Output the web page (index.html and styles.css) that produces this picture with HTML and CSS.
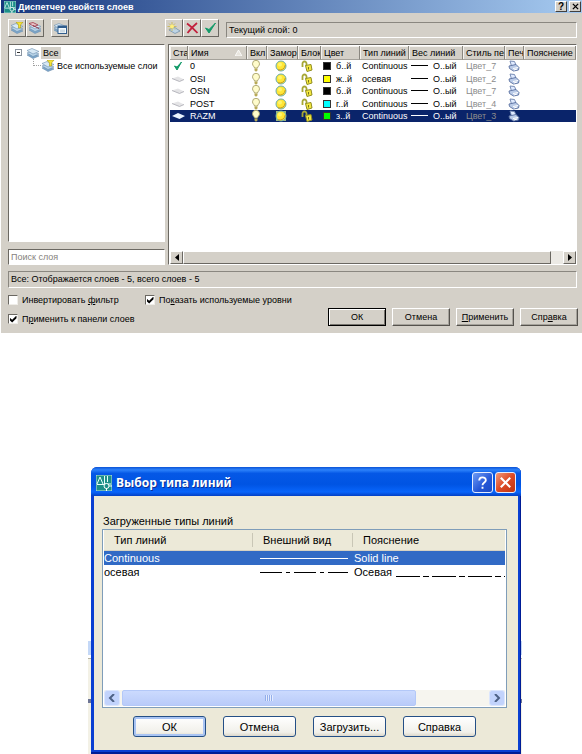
FILE: index.html
```html
<!DOCTYPE html>
<html lang="ru">
<head>
<meta charset="utf-8">
<title>Диспетчер свойств слоев</title>
<link rel="stylesheet" href="styles.css">
</head>
<body>
<svg class="sprite" aria-hidden="true">
  <symbol id="logo" viewBox="0 0 16 16">
    <rect width="16" height="16" fill="#1d8f88"/>
    <path d="M0 0H16V16H0Z" fill="none" stroke="#bfe3e0"/>
    <path d="M1 9L4 2L7 9M8.500 1V9H15M11.500 1V7M1 9.500H8" fill="none" stroke="#e8fffc"/>
    <circle cx="10.5" cy="11" r="2.5" fill="#1d8f88" stroke="#fff"/>
    <path d="M10.500 13V16M13 11H16" stroke="#fff"/>
  </symbol>
  <symbol id="layers" viewBox="0 0 14 12">
    <g stroke="#6d8fae" stroke-width=".6">
      <path d="M1 8L6 6L13 9L7 11.500Z" fill="#7ba6cb"/>
      <path d="M1 6L6 4L13 7L7 9.500Z" fill="#b9d4e8"/>
      <path d="M1 3.500L6 1.500L13 4.500L7 7Z" fill="#d7e8f4"/>
    </g>
  </symbol>
  <symbol id="layers-filter" viewBox="0 0 14 12">
    <use href="#layers"/>
    <path d="M6 0H13L10.500 3V6H8.500V3Z" fill="#f5e335" stroke="#a79a18" stroke-width=".6"/>
  </symbol>
  <symbol id="layers-group" viewBox="0 0 14 12">
    <use href="#layers"/>
    <path d="M1 1.500L5 .5L10 3L6 4.500Z" fill="#e7c4c8" stroke="#a33a49" stroke-width=".8"/>
    <path d="M5 3.500L11 6.500" stroke="#8c3346"/>
  </symbol>
  <symbol id="layers-state" viewBox="0 0 14 12">
    <use href="#layers"/>
    <rect x="5" y="4" width="8.500" height="7.500" fill="#f5fafd" stroke="#315d8d"/>
    <path d="M5 5H14" stroke="#315d8d" stroke-width="2"/>
    <rect x="7" y="7.500" width="5" height="3" fill="#cbd9e4"/>
  </symbol>
  <symbol id="layer-new" viewBox="0 0 14 12">
    <path d="M2 8L7 5L13 9L8 11.500Z" fill="#bed4e5" stroke="#6b8ba6" stroke-width=".7"/>
    <path d="M5 0V9M.5 4.500H9.500M2 1.500L8 7.500M8 1.500L2 7.500" stroke="#c8b64b" stroke-width=".8"/>
    <circle cx="5" cy="4.500" r="2" fill="#ffef7c"/>
  </symbol>
  <symbol id="cross" viewBox="0 0 14 12">
    <path d="M2 1.500Q7 5 12.500 11M12 1Q7 5 2.500 11" fill="none" stroke="#c2203c" stroke-width="1.800"/>
  </symbol>
  <symbol id="tick" viewBox="0 0 14 12">
    <path d="M2.500 6L6 11L12.500 1L6 7.500Z" fill="#129a68" stroke="#129a68"/>
  </symbol>
  <symbol id="tick-small" viewBox="0 0 14 12">
    <path d="M2.500 6L5 10L9.500 2L5 7Z" fill="#129a68" stroke="#129a68"/>
  </symbol>
  <symbol id="sheet" viewBox="0 0 14 12">
    <path d="M0 5.500L6 3.500L12 6.500L7.500 8.500Z" fill="#e4e4e6"/>
    <path d="M0 5.500L7.500 8.500L12 6.500" fill="none" stroke="#b0b0b8" stroke-width=".9"/>
  </symbol>
  <symbol id="sheet-on" viewBox="0 0 14 12">
    <path d="M0 6L6 3L13 6L7.500 9Z" fill="#e9f3ff"/>
  </symbol>
  <symbol id="bulb" viewBox="0 0 10 12">
    <path d="M3.500 8C3.500 6.500 1.500 6 1.500 3.800A3.500 3.500 0 0 1 8.500 3.800C8.500 6 6.500 6.500 6.500 8Z" fill="#fffccb" stroke="#a8a06a" stroke-width=".9"/>
    <path d="M3.500 8.500H6.500V10.500L5 11.800L3.500 10.500Z" fill="#b8a955"/>
  </symbol>
  <symbol id="sun" viewBox="0 0 12 12">
    <circle cx="6" cy="6" r="5" fill="#ffe636" stroke="#67abb0" stroke-width="1"/>
    <path d="M3 9.800Q9 11 10.300 5" fill="none" stroke="#c79c20"/>
    <circle cx="5" cy="4.500" r="2" fill="#fff56b"/>
  </symbol>
  <symbol id="sun-on" viewBox="0 0 12 12">
    <rect x="1" y="1" width="10" height="10" fill="#9db77a"/>
    <use href="#sun"/>
  </symbol>
  <symbol id="lock" viewBox="0 0 12 12">
    <path d="M1.500 7V3.500A2 2 0 0 1 5.500 3.500V6" fill="none" stroke="#a7a735" stroke-width="1.800"/>
    <path d="M4.500 5.500L10 4.500L11 10L6 11.500Z" fill="#f5e83f" stroke="#918e22"/>
    <path d="M7.500 7V9.500" stroke="#77741b"/>
  </symbol>
  <symbol id="printer" viewBox="0 0 12 12">
    <path d="M2 1L6.500 1.500L8 5L3.500 6Z" fill="#dfeaff" stroke="#6c82ae" stroke-width=".9"/>
    <path d="M1 6L8 4.500L11 7.500L10.500 10L5.500 11L1.500 8.500Z" fill="#bacbe8" stroke="#5a70a0" stroke-width=".9"/>
    <path d="M5 8.500L10 7.500M6 10L9 9" stroke="#fff"/>
  </symbol>
</svg>

<section class="layers-dialog">
  <header class="classic-title">
    <svg class="title-icon"><use href="#logo"/></svg>
    <h1>Диспетчер свойств слоев</h1>
    <button class="cap" aria-label="Справка по окну">?</button>
    <button class="cap" aria-label="Закрыть окно"><svg viewBox="0 0 8 8"><path d="M1 1L7 7M7 1L1 7" stroke="#000" stroke-width="1.500"/></svg></button>
  </header>
  <div class="layers-body">
    <div class="tools">
      <div class="tools-left">
        <button class="tool" aria-label="Новый фильтр"><svg><use href="#layers-filter"/></svg></button>
        <button class="tool" aria-label="Новая группа"><svg><use href="#layers-group"/></svg></button>
        <button class="tool apart" aria-label="Состояния слоев"><svg><use href="#layers-state"/></svg></button>
      </div>
      <div class="tools-right">
        <button class="tool" aria-label="Новый слой"><svg><use href="#layer-new"/></svg></button>
        <button class="tool" aria-label="Удалить слой"><svg><use href="#cross"/></svg></button>
        <button class="tool" aria-label="Установить текущим"><svg><use href="#tick"/></svg></button>
        <div class="current">Текущий слой: 0</div>
      </div>
    </div>
    <div class="panes">
      <div class="side">
        <ul class="tree">
          <li><span class="minus"></span><svg><use href="#layers"/></svg><span class="node chosen">Все</span></li>
          <li class="child"><span class="branch"></span><svg><use href="#layers-filter"/></svg><span class="node">Все используемые слои</span></li>
        </ul>
        <input class="search" type="text" placeholder="Поиск слоя" aria-label="Поиск слоя">
      </div>
      <div class="grid-pane">
        <table class="layers">
          <colgroup><col class="c-st"><col class="c-name"><col class="c-on"><col class="c-frz"><col class="c-lock"><col class="c-color"><col class="c-type"><col class="c-weight"><col class="c-style"><col class="c-print"><col></colgroup>
          <thead><tr><th>Ста</th><th><span class="sorted">Имя<svg viewBox="0 0 7 6"><path d="M0 6L3.500 0L7 6Z" fill="#e9e6df" stroke="#fff" stroke-width=".8"/></svg></span></th><th>Вкл</th><th>Замор</th><th>Блок</th><th>Цвет</th><th>Тип линий</th><th>Вес линий</th><th>Стиль пе</th><th>Печ</th><th>Пояснение</th></tr></thead>
          <tbody>
            <tr><td><svg><use href="#tick-small"/></svg></td><td>0</td><td><svg><use href="#bulb"/></svg></td><td class="freeze"><svg><use href="#sun"/></svg></td><td><svg><use href="#lock"/></svg></td><td><i class="swatch black"></i>б..й</td><td>Continuous</td><td><i class="stroke"></i>О..ый</td><td class="dim">Цвет_7</td><td><svg><use href="#printer"/></svg></td><td></td></tr>
            <tr><td><svg><use href="#sheet"/></svg></td><td>OSI</td><td><svg><use href="#bulb"/></svg></td><td class="freeze"><svg><use href="#sun"/></svg></td><td><svg><use href="#lock"/></svg></td><td><i class="swatch yellow"></i>ж..й</td><td>осевая</td><td><i class="stroke"></i>О..ый</td><td class="dim">Цвет_2</td><td><svg><use href="#printer"/></svg></td><td></td></tr>
            <tr><td><svg><use href="#sheet"/></svg></td><td>OSN</td><td><svg><use href="#bulb"/></svg></td><td class="freeze"><svg><use href="#sun"/></svg></td><td><svg><use href="#lock"/></svg></td><td><i class="swatch black"></i>б..й</td><td>Continuous</td><td><i class="stroke"></i>О..ый</td><td class="dim">Цвет_7</td><td><svg><use href="#printer"/></svg></td><td></td></tr>
            <tr><td><svg><use href="#sheet"/></svg></td><td>POST</td><td><svg><use href="#bulb"/></svg></td><td class="freeze"><svg><use href="#sun"/></svg></td><td><svg><use href="#lock"/></svg></td><td><i class="swatch cyan"></i>г..й</td><td>Continuous</td><td><i class="stroke"></i>О..ый</td><td class="dim">Цвет_4</td><td><svg><use href="#printer"/></svg></td><td></td></tr>
            <tr class="selected"><td><svg><use href="#sheet-on"/></svg></td><td>RAZM</td><td><svg><use href="#bulb"/></svg></td><td class="freeze"><svg><use href="#sun-on"/></svg></td><td><svg><use href="#lock"/></svg></td><td><i class="swatch green"></i>з..й</td><td>Continuous</td><td><i class="stroke"></i>О..ый</td><td class="dim">Цвет_3</td><td><svg><use href="#printer"/></svg></td><td></td></tr>
          </tbody>
        </table>
        <div class="classic-scroll">
          <button class="arrow" aria-label="Влево"><svg viewBox="0 0 4 7"><path d="M4 0V7L0 3.500Z"/></svg></button>
          <div class="thumb"></div>
          <div class="track"></div>
          <button class="arrow" aria-label="Вправо"><svg viewBox="0 0 4 7"><path d="M0 0V7L4 3.500Z"/></svg></button>
        </div>
      </div>
    </div>
    <div class="status">Все: Отображается слоев - 5, всего слоев - 5</div>
    <div class="foot">
      <div class="checks">
        <label><input type="checkbox"><span>Инвертировать <u>ф</u>ильтр</span></label>
        <label><input type="checkbox" checked><span>По<u>к</u>азать используемые уровни</span></label>
        <label><input type="checkbox" checked><span>П<u>р</u>именить к панели слоев</span></label>
      </div>
      <div class="actions">
        <button class="push default">ОК</button>
        <button class="push">Отмена</button>
        <button class="push"><u>П</u>рименить</button>
        <button class="push">Спр<u>а</u>вка</button>
      </div>
    </div>
  </div>
</section>

<section class="linetype-wrap">
  <div class="underlay"></div>
  <div class="linetype">
    <header class="xp-title">
      <svg class="xp-icon"><use href="#logo"/></svg>
      <h2>Выбор типа линий</h2>
      <button class="xp-cap" aria-label="Справка по окну"><svg viewBox="0 0 18 18"><path d="M5.500 7C5.500 2.500 12.500 2.500 12.500 6.500C12.500 9 9 9 9 12M9 13.500V15.500" fill="none" stroke="#fff" stroke-width="2"/></svg></button>
      <button class="xp-cap close" aria-label="Закрыть окно"><svg viewBox="0 0 18 18"><path d="M4 4L14 14M14 4L4 14" stroke="#fff" stroke-width="2.200"/></svg></button>
    </header>
    <div class="xp-body">
      <h3>Загруженные типы линий</h3>
      <div class="list">
        <table class="types">
          <colgroup><col class="t-name"><col class="t-look"><col></colgroup>
          <thead><tr><th>Тип линий</th><th>Внешний вид</th><th>Пояснение</th></tr></thead>
          <tbody>
            <tr class="selected"><td>Continuous</td><td><svg class="sample" viewBox="0 0 88 3"><path d="M0 1.500H88" stroke="#fff"/></svg></td><td>Solid line</td></tr>
            <tr><td>осевая</td><td><svg class="sample" viewBox="0 0 88 3"><path d="M0 1.500H88" stroke="#000" stroke-dasharray="22 4 4 4"/></svg></td><td><div class="desc">Осевая<svg class="axis" aria-hidden="true"><path d="M0 11.500H600" stroke="#000" stroke-dasharray="24 3 6 3"/></svg></div></td></tr>
          </tbody>
        </table>
        <div class="xp-scroll">
          <button class="xp-arrow" aria-label="Влево"><svg viewBox="0 0 8 8"><path d="M6 0L2 4L6 8" fill="none" stroke="#4d6185" stroke-width="2"/></svg></button>
          <div class="xp-thumb"></div>
          <button class="xp-arrow" aria-label="Вправо"><svg viewBox="0 0 8 8"><path d="M2 0L6 4L2 8" fill="none" stroke="#4d6185" stroke-width="2"/></svg></button>
        </div>
      </div>
      <div class="xp-actions">
        <button class="xp-push default">ОК</button>
        <button class="xp-push">Отмена</button>
        <button class="xp-push">Загрузить...</button>
        <button class="xp-push">Справка</button>
      </div>
    </div>
  </div>
</section>
</body>
</html>
```
FILE: styles.css
```css
* { box-sizing: border-box; }
body { margin: 0; background: #fff; color: #000; font: 9px/12px "Liberation Sans", Arial, sans-serif; }
h1, h2, h3, ul { margin: 0; padding: 0; list-style: none; }
button, input { font: inherit; color: inherit; margin: 0; padding: 0; border-radius: 0; }
svg { display: block; }
.sprite { position: absolute; width: 0; height: 0; }

/* Layer manager, classic look */
.layers-dialog { margin-left: 1px; background: #d4d0c8; }
.classic-title { display: flex; align-items: center; height: 13px; padding: 0 1px 0 3px; background: linear-gradient(90deg, #17377e, #a6caf0); }
.title-icon { width: 12px; height: 12px; margin-right: 2px; }
.classic-title h1 { flex: 1; color: #fff; font: bold 9px/12px "Liberation Sans", Arial, sans-serif; }
.cap { display: flex; align-items: center; justify-content: center; width: 12px; height: 11px; margin-left: 2px; font-weight: bold; font-size: 10px; background: #d4d0c8; border: 1px solid; border-color: #fff #404040 #404040 #fff; }
.cap svg { width: 7px; height: 7px; }
.layers-body { padding: 6px 4px 7px 7px; }
.tools { display: flex; height: 19px; margin-bottom: 6px; }
.tools-left { display: flex; width: 157px; flex: none; }
.tools-right { display: flex; flex: 1; margin-right: 1px; }
.tool { display: flex; align-items: center; justify-content: center; width: 18px; height: 18px; background: #d4d0c8; border: 1px solid; border-color: #fff #6b6862 #6b6862 #fff; }
.tool svg { width: 14px; height: 12px; }
.apart { margin-left: 7px; }
.current { flex: 1; height: 16px; margin: 3px 0 0 7px; padding: 1px 2px; }
.current, .status { border: 1px solid; border-color: #8a8780 #fff #fff #8a8780; }
.panes { display: flex; gap: 3px; height: 221px; margin-right: 1px; }
.side { display: flex; flex-direction: column; gap: 7px; width: 157px; flex: none; }
.tree, .search, .grid-pane { background: #fff; border: 1px solid; border-color: #6b6862 #fff #fff #6b6862; }
.tree { flex: 1; padding: 1px 0 0 6px; }
.tree li { display: flex; align-items: center; height: 13px; }
.tree svg { width: 14px; height: 12px; }
.tree .child { padding-left: 18px; }
.minus { width: 7px; height: 7px; margin-right: 4px; border: 1px solid #8b94a0; background: linear-gradient(#333, #333) center / 3px 1px no-repeat; }
.branch { width: 8px; height: 7px; margin: -6px 0 0 0; border: 1px dotted #a0a0a0; border-width: 0 0 1px 1px; }
.node { padding: 0 2px; }
.chosen { margin-left: 1px; background: #d4d0c8; }
.search { height: 16px; padding: 0 2px; }
.search::placeholder { color: #85827c; opacity: 1; }
.grid-pane { display: flex; flex-direction: column; justify-content: space-between; flex: 1; min-width: 0; padding: 1px 0 0 1px; }
.layers, .types { width: 100%; table-layout: fixed; border-collapse: separate; border-spacing: 0; }
.layers th, .layers td { padding: 0 0 0 3px; overflow: hidden; text-align: left; white-space: nowrap; font-weight: normal; vertical-align: middle; line-height: 12px; }
.layers th { height: 14px; background: #d4d0c8; border-right: 1px solid #8a8780; border-bottom: 1px solid #a5a29b; box-shadow: inset 1px 1px #f4f2ee; }
.layers td { height: 13px; padding-left: 2px; }
.layers .freeze { padding-left: 7px; }
.layers tbody tr:nth-child(odd) td { height: 12px; }
.layers td svg { width: 14px; height: 12px; }
.layers .selected { background: #0a246a; color: #fff; }
.layers .dim { padding-left: 3px; color: #8c8c8c; }
.c-st { width: 18px; }
.c-name { width: 59px; }
.c-on { width: 20px; }
.c-frz { width: 31px; }
.c-lock { width: 23px; }
.c-color { width: 39px; }
.c-type { width: 49px; }
.c-weight { width: 54px; }
.c-style { width: 42px; }
.c-print { width: 19px; }
.sorted { display: flex; align-items: center; justify-content: space-between; padding-right: 4px; }
.sorted svg { width: 7px; height: 6px; }
.swatch { display: inline-block; width: 8px; height: 8px; margin-right: 5px; border: 1px solid #333; vertical-align: -1px; }
.black { background: #000; }
.yellow { background: #ff0; }
.cyan { background: #0ff; }
.green { background: #0f0; }
.stroke { display: inline-block; width: 17px; height: 1px; margin-right: 5px; background: currentColor; vertical-align: 3px; }
.classic-scroll { display: flex; height: 13px; }
.arrow, .thumb { background: #d4d0c8; border: 1px solid; border-color: #fff #6b6862 #6b6862 #fff; }
.arrow { display: flex; align-items: center; justify-content: center; width: 13px; height: 13px; }
.arrow svg { width: 4px; height: 7px; }
.thumb { flex: 1; }
.track { width: 12px; background: #eceae5; }
.status { height: 17px; margin: 6px 1px 6px 0; padding: 1px 2px; line-height: 12px; }
.foot { display: flex; justify-content: space-between; }
.checks { display: grid; grid-template-columns: 137px auto; row-gap: 7px; align-content: start; }
.checks label { display: flex; align-items: center; gap: 4px; height: 12px; white-space: nowrap; }
.checks input { display: grid; place-items: center; appearance: none; width: 10px; height: 10px; background: #fff; border: 1px solid; border-color: #6b6862 #efede8 #efede8 #6b6862; }
.checks input:checked::before { content: ""; width: 7px; height: 7px; background: #000; clip-path: polygon(0 30%, 38% 62%, 100% 0, 100% 38%, 38% 100%, 0 66%); }
.actions { display: flex; align-items: end; gap: 6px; padding-top: 14px; }
.push { width: 58px; height: 18px; background: #d4d0c8; border: 1px solid; border-color: #fff #55524d #55524d #fff; box-shadow: inset -1px -1px #a5a29b; }
.push.default { border-color: #000; box-shadow: inset 1px 1px #fff, inset -1px -1px #77746e; }

/* Linetype picker, Luna look */
.linetype-wrap { position: relative; margin: 134px 61px 0 91px; font-size: 11px; line-height: 14px; }
.underlay { position: absolute; top: 174px; left: -3px; right: -1px; bottom: 0; background: linear-gradient(#c4d8f7 0 14px, #fff 14px 17px, #b5b2a2 17px 18px, #f3f1e6 18px 58px, #6d7594 58px 62px, #f3f1e6 62px 100%); }
.linetype { position: relative; padding: 0 3px 4px; background: #0a3fd2; border-radius: 6px 6px 0 0; box-shadow: inset -1px -2px #001d96; }
.xp-title { display: flex; align-items: center; height: 29px; margin: 0 -3px; padding: 2px 5px 0 5px; border-radius: 6px 6px 0 0; background: linear-gradient(#0b53d6, #2c82fb 10%, #0558e6 22%, #0054e3 60%, #0865fb 86%, #0340c4); }
.xp-icon { width: 16px; height: 16px; margin-right: 4px; }
.xp-title h2 { flex: 1; color: #fff; font: bold 12px/16px "Noto Sans", "Open Sans", sans-serif; text-shadow: 1px 1px #0b2f96; }
.xp-cap { width: 21px; height: 21px; margin-left: 2px; padding: 1px; border: 1px solid #e5edff; border-radius: 3px; background: linear-gradient(135deg, #6e9bf5, #2456d6 60%, #1c4bc4); }
.xp-cap.close { background: linear-gradient(135deg, #f0997c, #dd4a25 50%, #bf3410); }
.xp-cap svg { width: 17px; height: 17px; }
.xp-body { padding: 18px 11px 13px 8px; background: #ece9d8; }
.xp-body h3 { padding-left: 1px; font: inherit; margin-bottom: 1px; }
.list { display: flex; flex-direction: column; justify-content: space-between; height: 179px; padding: 0 1px 1px; background: #fff; border: 1px solid #7f9db9; }
.types th, .types td { padding: 0; overflow: hidden; text-align: left; font-weight: normal; white-space: nowrap; line-height: 14px; }
.types th { height: 21px; padding-left: 10px; background: #ece9d8; border-bottom: 1px solid #d6d2c2; }
.types th + th { background: linear-gradient(#c9c6b6, #c9c6b6) left center / 1px 14px no-repeat #ece9d8; padding-left: 11px; }
.types td { height: 14px; }
.types .selected { background: #316ac5; color: #fff; }
.types td:nth-child(2) { padding-left: 8px; }
.types td:nth-child(3) { padding-left: 2px; }
.t-name { width: 148px; }
.t-look { width: 100px; }
.sample { width: 88px; height: 3px; }
.desc { display: flex; gap: 4px; }
.axis { flex: 1; min-width: 0; width: 0; height: 14px; }
.xp-scroll { display: flex; height: 16px; background: #f6f5ef; }
.xp-arrow { display: grid; place-items: center; width: 16px; height: 16px; border: 1px solid #dce6fd; border-radius: 3px; background: #c2d3fc; }
.xp-arrow svg { width: 8px; height: 8px; }
.xp-thumb { flex: 0 0 294px; margin: 0 auto 0 2px; border: 1px solid #b3c8f8; border-radius: 2px; background: repeating-linear-gradient(90deg, #93aeea 0 1px, #e4ecff 1px 2px) center / 8px 6px no-repeat, linear-gradient(#cbdafe, #b9cbf9); }
.xp-actions { display: flex; justify-content: center; gap: 17px; margin-top: 8px; }
.xp-push { width: 73px; height: 21px; border: 1px solid #244f86; border-radius: 3px; background: linear-gradient(#fff, #f1f0ea 80%, #dcd8cb); }
.xp-push.default { box-shadow: inset 0 0 0 2px #a9c4f3; }
```
